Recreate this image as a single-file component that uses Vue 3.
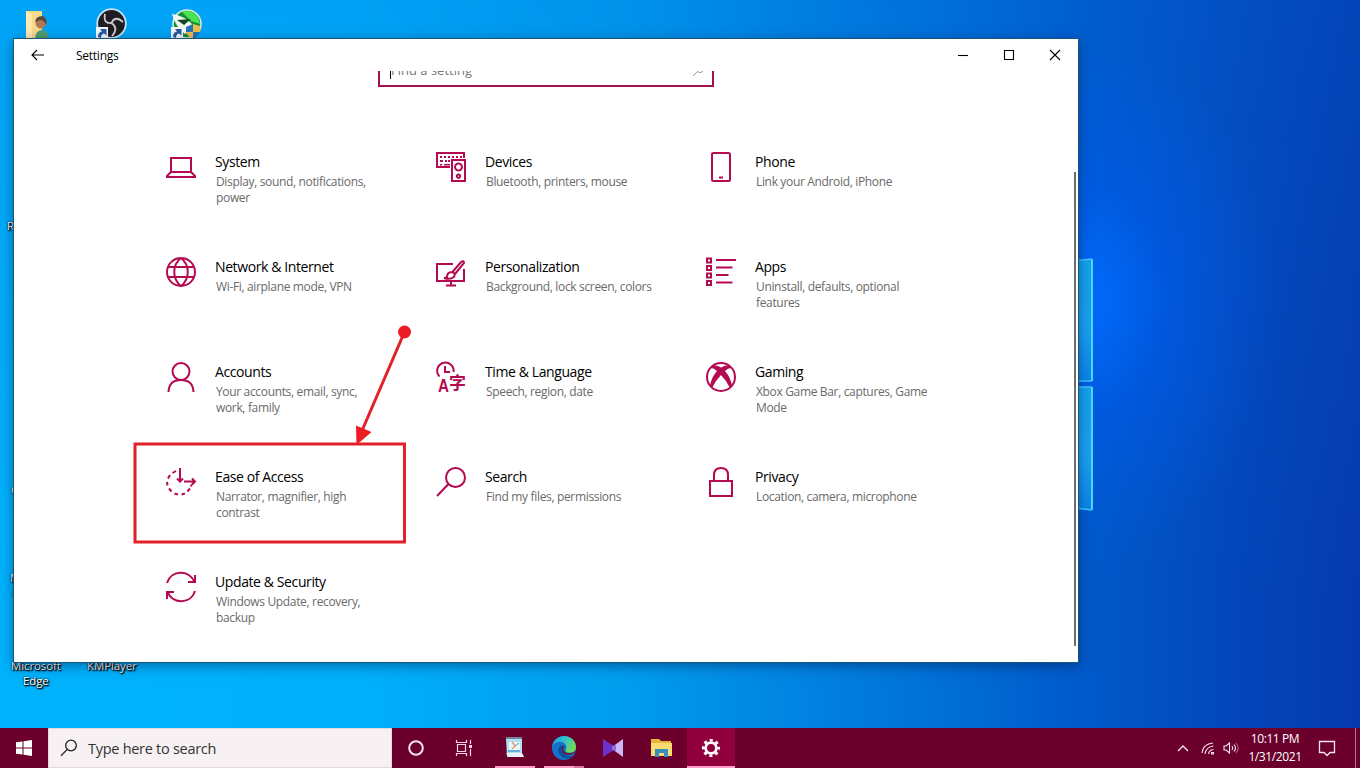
<template>
  <div class="desktop">
    <svg class="wallpaper-logo" viewBox="0 0 120 260">
      <defs>
        <linearGradient id="pane" x1="0" y1="0" x2="0" y2="1">
          <stop offset="0" stop-color="#14a3ee" />
          <stop offset="0.6" stop-color="#1b9ff2" />
          <stop offset="1" stop-color="#0b84ea" />
        </linearGradient>
      </defs>
      <path d="M0 14L112 4V126H0Z" fill="url(#pane)" />
      <path d="M0 132H112V255L0 243Z" fill="url(#pane)" />
      <path d="M112 4V126M112 132V255" stroke="#4fd6fa" stroke-width="2" />
      <path d="M60 9L112 4M60 126H112M60 132H112M60 249L112 255" stroke="#3bc8fb" stroke-width="1.4" />
    </svg>

    <div class="shortcut shortcut--user">
      <svg width="28" height="32" viewBox="0 0 28 32">
        <path d="M2 1H18V32H2Z" fill="#f6d98a" />
        <path d="M2 1L8 4V32H2Z" fill="#ffe9ab" />
        <path d="M11 31Q11 20 18 20Q25 20 25 31Z" fill="#4f9c71" />
        <circle cx="17" cy="13" r="5.5" fill="#ad7b55" />
        <path d="M11 12Q12 6 18 6Q24 8 22 15Q20 10 16 10Z" fill="#5d4a3a" />
      </svg>
    </div>
    <div class="shortcut shortcut--obs">
      <svg width="34" height="34" viewBox="0 0 34 34">
        <circle cx="17.500" cy="15.500" r="14.300" fill="#201d22" stroke="#c3e3f5" stroke-width="1.8" />
        <g fill="none" stroke="#d0cccf" stroke-width="1.8">
          <path d="M17.500 15Q9 16 11 6" />
          <path d="M17.500 15Q21 7 29 14" />
          <path d="M17.500 15Q25 20 18 28" />
        </g>
        <path d="M2 19H14V31H2Z" fill="#f3f7fb" />
        <path d="M4 29Q4 24 8 23.500L6 21H12.500V27.500L10 25.500Q7 26 7 30Z" fill="#255ba3" />
      </svg>
    </div>
    <div class="shortcut shortcut--idm">
      <svg width="34" height="34" viewBox="0 0 34 34">
        <circle cx="18" cy="16" r="14" fill="#178d35" stroke="#d8eee5" stroke-width="1.5" />
        <path d="M3 6Q15 7 26 19L16 26Q6 18 3 6Z" fill="#f2f8f0" />
        <path d="M13 4Q22 0 29 9L31 16L22 13Z" fill="#48e451" />
        <path d="M8 12L22 11L15 17Z" fill="#144820" />
        <path d="M17 19L24 16V24H17Z" fill="#2374ba" />
        <path d="M24 16L31 18Q32 21 31 24H24Z" fill="#edbf4c" />
        <path d="M17 24H24V31Q19 29 17 24Z" fill="#edbf4c" />
        <path d="M24 24H31Q29 29 24 31Z" fill="#2374ba" />
        <path d="M2 19H14V31H2Z" fill="#f3f7fb" />
        <path d="M4 29Q4 24 8 23.500L6 21H12.500V27.500L10 25.500Q7 26 7 30Z" fill="#255ba3" />
      </svg>
    </div>

    <span
      class="label"
      v-for="(label, index) in labels"
      :key="index"
      :style="{ left: label.x + 'px', top: label.y + 'px' }"
    >{{ label.text }}</span>

    <main class="window">
      <header class="titlebar">
        <svg class="back" width="14" height="12" viewBox="0 0 14 12">
          <path d="M1 6H13M6 1L1 6L6 11" />
        </svg>
        <span class="titlebar-name">Settings</span>
        <svg class="control" width="46" height="32" viewBox="0 0 46 32">
          <path d="M18 16.500H28" />
        </svg>
        <svg class="control" width="46" height="32" viewBox="0 0 46 32">
          <path d="M18.500 11.500H27.500V20.500H18.500Z" />
        </svg>
        <svg class="control" width="46" height="32" viewBox="0 0 46 32">
          <path d="M18 11L28 21M28 11L18 21" />
        </svg>
      </header>

      <div class="content">
        <div class="find">
          <i class="caret"></i>
          <span>Find a setting</span>
          <svg width="14" height="14" viewBox="0 0 14 14">
            <path d="M5.500 8.500L1 13M5.500 8.500A4 4 0 1 0 5 3A4 4 0 0 0 5.500 8.500Z" fill="none" stroke="#999" />
          </svg>
        </div>

        <div class="grid">
          <div class="category" v-for="item in categories" :key="item.title">
            <svg class="category-icon" viewBox="0 0 30 30">
              <template v-if="item.icon === 'language'">
                <path d="M3.500 14.500A8.200 8.200 0 1 1 17.500 10M9 4V10H14" />
                <text class="glyph" x="2" y="30" textLength="11" lengthAdjust="spacingAndGlyphs">A</text>
                <text class="glyph glyph--cjk" x="13" y="26.500">字</text>
              </template>
              <template v-else>
                <path :d="icons[item.icon]" />
                <path v-if="solids[item.icon]" class="solid" :d="solids[item.icon]" />
              </template>
            </svg>
            <div class="category-text">
              <div class="category-title">{{ item.title }}</div>
              <div class="category-note" v-for="line in item.lines" :key="line">{{ line }}</div>
            </div>
          </div>
        </div>
      </div>
      <div class="scrollbar"></div>
    </main>

    <svg class="annotation" width="290" height="226" viewBox="0 0 290 226">
      <rect x="5" y="124" width="269.500" height="98" />
      <path d="M274.500 12L231 113" />
      <circle cx="274.500" cy="12" r="6.500" />
      <path class="head" d="M226.500 125L226 105.500L241.500 112Z" />
    </svg>

    <footer class="taskbar">
      <div class="start">
        <svg width="16" height="16" viewBox="0 0 16 16">
          <path d="M0 2.300L6.500 1.400V7.500H0ZM7.500 1.200L16 0V7.500H7.500ZM0 8.500H6.500V14.600L0 13.700ZM7.500 8.500H16V16L7.500 14.800Z" fill="#fff" />
        </svg>
      </div>
      <div class="search">
        <svg width="18" height="18" viewBox="0 0 18 18">
          <circle cx="11" cy="6.500" r="5.300" />
          <path d="M7.300 10.400L1 16.700" />
        </svg>
        <span>Type here to search</span>
      </div>
      <div class="task">
        <svg width="48" height="40" viewBox="0 0 48 40">
          <circle cx="24" cy="20" r="6.800" fill="none" stroke="#fbe3ec" stroke-width="2" />
        </svg>
      </div>
      <div class="task">
        <svg width="48" height="40" viewBox="0 0 48 40">
          <path d="M16.500 12V14.500H26.500V12M17.500 16.500H25.500V23.500H17.500ZM16.500 28V25.500H26.500V28M30.500 12V16M30.500 21V28" fill="none" stroke="#f5d7e2" stroke-width="1.200" />
          <path d="M29 17H32V20H29Z" fill="#f5d7e2" />
        </svg>
      </div>
      <div class="task task--first task--open">
        <svg width="48" height="40" viewBox="0 0 48 40">
          <path d="M15 10H31V26L33 29H16Z" fill="#b6dff2" />
          <path d="M15 9H31V11H15Z" fill="#6d8799" />
          <path d="M18 14H29V22H18Z" fill="#edf5f5" />
          <path d="M21 14L24 18L21 21" fill="none" stroke="#df9b69" stroke-width="1.300" />
          <path d="M24 18L28 15" stroke="#4a94c6" />
          <path d="M15 25H31L33 29H18Z" fill="#e9f3f8" />
          <path d="M17 23H29" stroke="#62b3dd" stroke-width="2" />
        </svg>
      </div>
      <div class="task task--open task--stacked">
        <svg width="48" height="40" viewBox="0 0 48 40">
          <defs>
            <linearGradient id="edge" x1="0" y1="0" x2="1" y2="0.500">
              <stop offset="0" stop-color="#1599dc" />
              <stop offset="0.500" stop-color="#30c2d1" />
              <stop offset="1" stop-color="#70da56" />
            </linearGradient>
          </defs>
          <circle cx="24" cy="20" r="12" fill="#1373cb" />
          <path d="M12 19C13 12 18 8 24 8C31 8 36 13 36 19C36 24 31 26 26 24Q25 23 26 21C28 17 23 13 18 14Q13 15 12 19Z" fill="url(#edge)" />
          <path d="M21 17Q15 23 22 29Q28 33 33 28Q26 29 23 24Q21 21 24 18Z" fill="#0d4f99" />
          <path d="M25 18Q22 21 25 24Q29 27 36 23Q33 27 28 27Q22 26 22 21Q22 18 25 18Z" fill="#6b1538" />
        </svg>
      </div>
      <div class="task">
        <svg width="48" height="40" viewBox="0 0 48 40">
          <path d="M14 11L25 18V22L14 29Z" fill="#6934c7" />
          <path d="M34 11V29L23 21V19Z" fill="#cdb6f5" />
          <path d="M23 19L27 16V24L23 21Z" fill="#9170de" />
        </svg>
      </div>
      <div class="task task--files">
        <svg width="48" height="40" viewBox="0 0 48 40">
          <path d="M14 11H22L24 13H34V28H14Z" fill="#e8b53d" />
          <path d="M14 15H35V28H14Z" fill="#fbdc72" />
          <path d="M18 21H31V29H27V25H22V29H18Z" fill="#368fbd" />
        </svg>
      </div>
      <div class="task task--active">
        <svg width="48" height="40" viewBox="0 0 48 40">
          <circle cx="24" cy="20" r="5.400" fill="none" stroke="#fff" stroke-width="2.800" />
          <circle cx="24" cy="20" r="7.700" fill="none" stroke="#fff" stroke-width="2.800" stroke-dasharray="3 3.047" stroke-dashoffset="1.500" />
        </svg>
      </div>

      <div class="tray">
        <svg width="12" height="8" viewBox="0 0 12 8">
          <path d="M1 7L6 2L11 7" stroke-width="1.400" />
        </svg>
        <svg class="wifi" width="14" height="14" viewBox="0 0 14 14">
          <path d="M1 12Q2 3 12 2M4 13Q5 6 12.500 5M7.500 13Q8 9 12.500 8.500" />
          <path d="M10.500 11.500H12.500V13H10.500Z" />
        </svg>
        <svg class="volume" width="16" height="14" viewBox="0 0 16 14">
          <path d="M1 5H3L6.500 2V12L3 9H1ZM9 5Q10.500 7 9 9M11 3.500Q14 7 11 10.500" />
          <path d="M13 2Q17.500 7 13 12" opacity="0.45" />
        </svg>
        <div class="clock">
          <div>10:11 PM</div>
          <div>1/31/2021</div>
        </div>
        <svg class="notice" width="18" height="18" viewBox="0 0 18 18">
          <path d="M1.500 2.500H16.500V13.500H12L9 16.500L6 13.500H1.500Z" stroke-width="1.300" />
        </svg>
        <div class="peek"></div>
      </div>
    </footer>
  </div>
</template>

<script setup>
const labels = [
  { x: 7, y: 218, text: 'R' },
  { x: 11, y: 482, text: 'C' },
  { x: 10, y: 570, text: 'M' },
  { x: 12, y: 586, text: 'C' },
  { x: 11, y: 658, text: 'Microsoft' },
  { x: 23, y: 673, text: 'Edge' },
  { x: 87, y: 658, text: 'KMPlayer' }
]

const categories = [
  { icon: 'system', title: 'System', lines: ['Display, sound, notifications,', 'power'] },
  { icon: 'devices', title: 'Devices', lines: ['Bluetooth, printers, mouse'] },
  { icon: 'phone', title: 'Phone', lines: ['Link your Android, iPhone'] },
  { icon: 'network', title: 'Network & Internet', lines: ['Wi-Fi, airplane mode, VPN'] },
  { icon: 'personalization', title: 'Personalization', lines: ['Background, lock screen, colors'] },
  { icon: 'apps', title: 'Apps', lines: ['Uninstall, defaults, optional', 'features'] },
  { icon: 'accounts', title: 'Accounts', lines: ['Your accounts, email, sync,', 'work, family'] },
  { icon: 'language', title: 'Time & Language', lines: ['Speech, region, date'] },
  { icon: 'gaming', title: 'Gaming', lines: ['Xbox Game Bar, captures, Game', 'Mode'] },
  { icon: 'access', title: 'Ease of Access', lines: ['Narrator, magnifier, high', 'contrast'] },
  { icon: 'search', title: 'Search', lines: ['Find my files, permissions'] },
  { icon: 'privacy', title: 'Privacy', lines: ['Location, camera, microphone'] },
  { icon: 'update', title: 'Update & Security', lines: ['Windows Update, recovery,', 'backup'] }
]

const icons = {
  system: 'M5 6H25V20H5ZM5 20L1 24V25H29V24L25 20',
  devices: 'M14 15H1V1H28V6M16 8H29V29H16ZM22.500 11.500A3.500 3.500 0 1 0 22.510 11.500ZM22.500 22.500A1.700 1.700 0 1 0 22.510 22.500Z',
  phone: 'M7.500 1H22.500Q24 1 24 2.500V27.500Q24 29 22.500 29H7.500Q6 29 6 27.500V2.500Q6 1 7.500 1ZM13 25.500H17',
  network: 'M15 1A14 14 0 1 0 15 29A14 14 0 1 0 15 1ZM15 1C6 8 6 22 15 29C24 22 24 8 15 1ZM2.500 10H27.500M2.500 20H27.500',
  personalization: 'M17 7H1V24H28V12M15 24V28M10 28.500H20M16.500 15L25 5Q28 3 28 6L19 17M16 15Q11 15 11 20Q10 21 8 21Q14 23 18 20Q20 16 16 15Z',
  apps: 'M1 1.500H5V5.500H1ZM1 9H5V13H1ZM1 16.500H5V20.500H1ZM1 24H5V28H1ZM10 3H30M10 10.500H26.500M10 18H22.500M10 25.500H26.500',
  accounts: 'M15 1A8.500 8.500 0 1 0 15 18A8.500 8.500 0 1 0 15 1ZM2.500 30Q3 18 15 18Q27 18 27.500 30',
  gaming: 'M15 1A14 14 0 1 0 15 29A14 14 0 1 0 15 1Z',
  access: 'M14 1V14.500M11 11.500L14 14.500L17 11.500M18 14.500H29M26 11.500L29 14.500L26 17.500M10 4L6.500 6M4 8L2 11.500M1 15L1.500 18.500M3 21.500L5.500 24.500M8.500 26.500L12 27.500M15.500 27.500L19 26.500M21.500 24.500L24 21.500M25 19.500L25.500 17.500',
  search: 'M19.500 1A9.500 9.500 0 1 0 19.500 20A9.500 9.500 0 1 0 19.500 1ZM12.500 17L1 29',
  privacy: 'M4 14H26V29H4ZM8 14V8Q8 1 15 1Q22 1 22 8V14',
  update: 'M1 11C5 -2 23 -3 28.500 10M29 3V10H22M29 19C25 32 7 33 1.500 20M1 27V20H8'
}

const solids = {
  devices: 'M4 4H6V6H4ZM8 4H10V6H8ZM12 4H14V6H12ZM16 4H18V6H16ZM20 4H22V6H20ZM24 4H26V6H24ZM4 8H7V10H4ZM9 8H11V10H9ZM12 8H14V10H12ZM4 12H6V13.500H4ZM8 12H14V13.500H8Z',
  gaming: 'M7 4Q10 2.500 15 5.500Q20 2.500 23 4L25 6Q22 6 19 9Q25 16 26 24L24 26Q20 18 15 13Q10 18 6 26L4 24Q5 16 11 9Q8 6 5 6Z'
}
</script>

<style>
body {
  overflow: hidden;
}
</style>

<style scoped>
.desktop {
  position: relative;
  width: 1360px;
  height: 768px;
  overflow: hidden;
  display: flex;
  flex-direction: column;
  font-family: 'Open Sans', 'Noto Sans', sans-serif;
  background:
    radial-gradient(ellipse 190px 260px at 1085px 300px, rgba(0, 108, 255, 0.95), rgba(0, 90, 240, 0.5) 45%, rgba(0, 70, 210, 0) 100%),
    linear-gradient(to bottom, rgba(0, 110, 225, 0.22), rgba(0, 110, 225, 0) 600px),
    linear-gradient(to right, #00b2fc 0, #00b0fb 350px, #009dee 620px, #0078dc 880px, #005aca 1080px, #0346ba 1240px, #053aae 1360px);
}

.wallpaper-logo {
  position: absolute;
  left: 980px;
  top: 255px;
  width: 120px;
  height: 260px;
}

.shortcut {
  position: absolute;
  top: 8px;
}

.shortcut--user {
  left: 24px;
  top: 10px;
}

.shortcut--obs {
  left: 94px;
}

.shortcut--idm {
  left: 169px;
}

.label {
  position: absolute;
  font-size: 11.5px;
  line-height: 16px;
  letter-spacing: -0.1px;
  color: #fff;
  text-shadow: 1px 1px 1px #000, 1px 1px 2px #000, 0 0 2px #000;
}

.window {
  position: relative;
  flex: none;
  width: 1064px;
  height: 623px;
  margin: 39px 0 0 14px;
  background: #fff;
  box-shadow: 0 0 0 1px #145579, 0 3px 12px rgba(0, 20, 60, 0.5);
}

.titlebar {
  height: 32px;
  display: flex;
  align-items: center;
}

.titlebar svg {
  fill: none;
  stroke: #000;
  stroke-width: 1.1;
}

.back {
  margin-left: 17px;
}

.titlebar-name {
  flex: 1;
  margin-left: 31px;
  font-size: 12px;
  letter-spacing: -0.25px;
  padding-top: 1px;
}

.content {
  height: 591px;
  overflow: hidden;
}

.find {
  box-sizing: border-box;
  width: 336px;
  height: 32px;
  margin: -16px 0 0 364px;
  padding: 0 6px 2px 10px;
  border: 2px solid #a01250;
  display: flex;
  align-items: center;
  font-size: 13px;
  color: #777;
}

.find span {
  flex: 1;
}

.caret {
  width: 1px;
  height: 17px;
  background: #000;
}

.grid {
  display: grid;
  grid-template-columns: repeat(3, 270px);
  grid-auto-rows: 105px;
  padding: 65px 0 0 152px;
}

.category {
  display: flex;
  gap: 19px;
}

.category-icon {
  flex: none;
  width: 30px;
  height: 30px;
  fill: none;
  stroke: #b40a52;
  stroke-width: 2;
  overflow: visible;
}

.solid {
  fill: #b40a52;
  stroke: none;
}

.glyph {
  font-family: 'Liberation Sans', sans-serif;
  font-size: 19px;
  font-weight: 700;
  fill: #b40a52;
  stroke: none;
}

.glyph--cjk {
  font-family: 'Noto Sans CJK SC', sans-serif;
  font-size: 17px;
}

.category-title {
  font-size: 14px;
  line-height: 20px;
  letter-spacing: -0.4px;
  margin-bottom: 2px;
  color: #000;
  white-space: nowrap;
}

.category-note {
  font-size: 12px;
  line-height: 16px;
  letter-spacing: -0.34px;
  padding-left: 1px;
  color: #6a6a6a;
  white-space: nowrap;
}

.scrollbar {
  position: absolute;
  right: 2px;
  top: 133px;
  width: 2px;
  height: 474px;
  background: #6d6d6d;
}

.annotation {
  position: absolute;
  left: 130px;
  top: 320px;
  fill: none;
  stroke: #e12029;
  stroke-width: 3;
}

.annotation circle,
.head {
  fill: #ed1c24;
  stroke: none;
}

.taskbar {
  display: flex;
  height: 40px;
  margin-top: auto;
  background: #6a002b;
}

.start {
  width: 48px;
  display: flex;
  align-items: center;
  justify-content: center;
}

.search {
  box-sizing: border-box;
  width: 344px;
  display: flex;
  align-items: center;
  gap: 10px;
  padding-left: 11px;
  background: #f7f1f3;
  border: 1px solid #e4d8dc;
  font-size: 14.5px;
  letter-spacing: -0.28px;
  color: #333;
}

.search svg {
  fill: none;
  stroke: #222;
  stroke-width: 1.3;
}

.task {
  position: relative;
  width: 48px;
  margin-right: 1px;
}

.task:nth-child(3),
.task:nth-child(4) {
  margin-right: 0;
}

.task--first {
  margin-left: 3px;
}

.task--files svg {
  margin-left: -1px;
}

.task--open::after {
  content: '';
  position: absolute;
  left: 4px;
  bottom: 0;
  width: 40px;
  height: 2px;
  background: #ff9dc8;
}

.task--stacked::after {
  background: linear-gradient(to right, #ff9dc8 30px, #d277a0 30px);
}

.task--active {
  background: #91003c;
  box-shadow: inset 0 -2px #ff9dc8;
}

.tray {
  display: flex;
  align-items: center;
  margin-left: auto;
}

.tray svg {
  fill: none;
  stroke: #fbe3ec;
  stroke-width: 1.1;
}

.wifi {
  margin-left: 12px;
}

.volume {
  margin-left: 8px;
}

.clock {
  width: 60px;
  margin-left: 6px;
  font-size: 12px;
  line-height: 18px;
  letter-spacing: -0.4px;
  text-align: center;
  color: #fff;
}

.notice {
  margin-left: 13px;
}

.peek {
  width: 4px;
  height: 40px;
  margin-left: 19px;
  border-left: 1px solid #b37794;
}
</style>
